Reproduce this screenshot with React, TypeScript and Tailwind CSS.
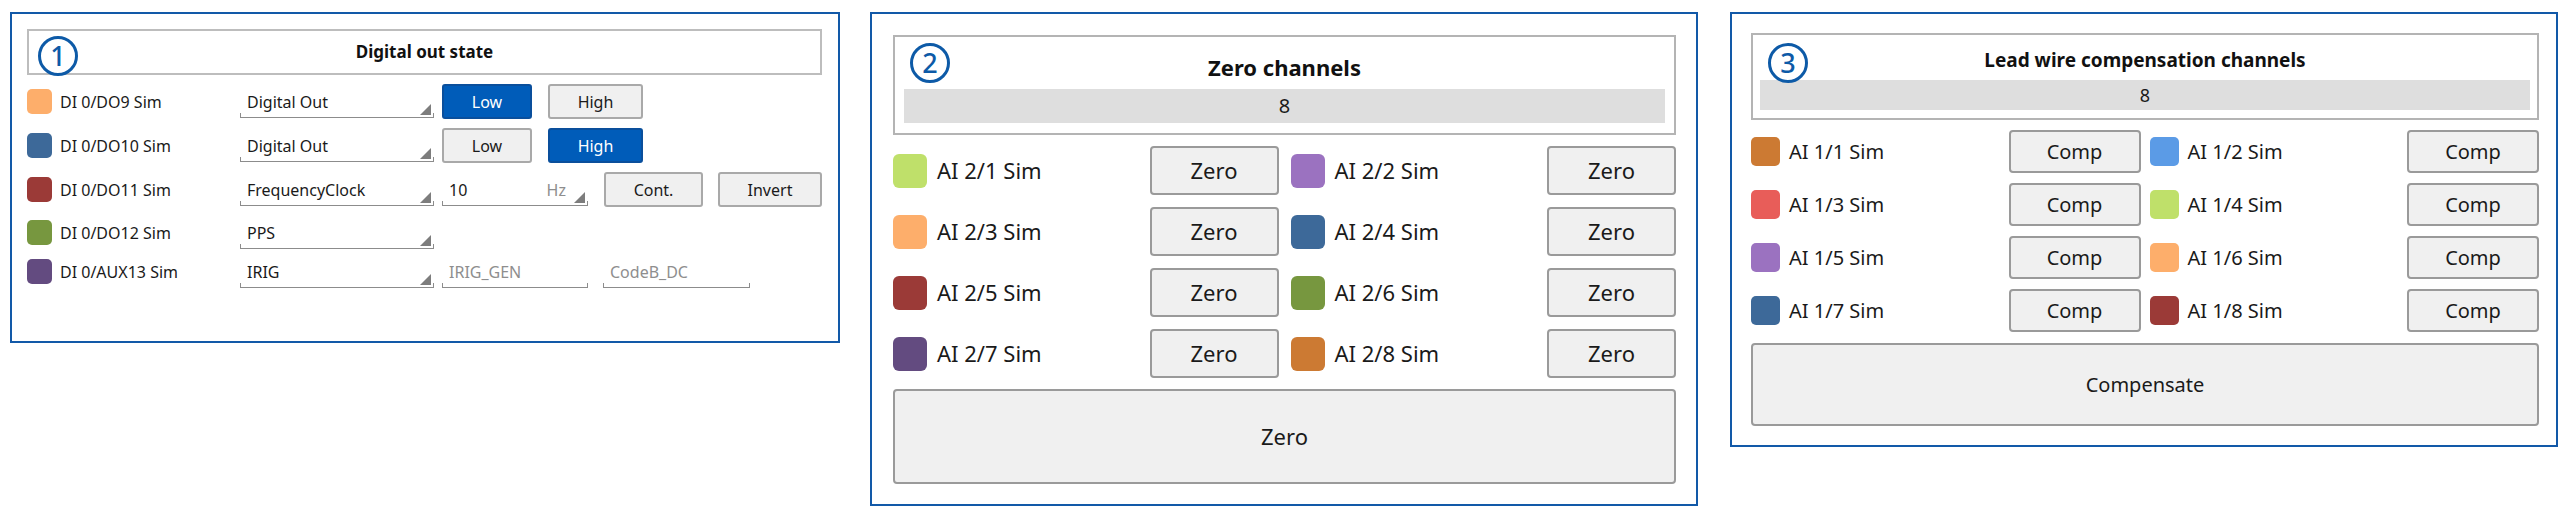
import React from 'react'

type DoRow = {
  name: string
  swatch: string
  mode: string
  kind: 'state' | 'freq' | 'none' | 'irig'
  active?: 'low' | 'high'
  gap: string
}

const doRows: DoRow[] = [
  { name: 'DI 0/DO9 Sim', swatch: 'bg-[#fdae6b]', mode: 'Digital Out', kind: 'state', active: 'low', gap: 'mt-[9px]' },
  { name: 'DI 0/DO10 Sim', swatch: 'bg-[#3d6999]', mode: 'Digital Out', kind: 'state', active: 'high', gap: 'mt-[9px]' },
  { name: 'DI 0/DO11 Sim', swatch: 'bg-[#9b3a37]', mode: 'FrequencyClock', kind: 'freq', gap: 'mt-[9px]' },
  { name: 'DI 0/DO12 Sim', swatch: 'bg-[#77973f]', mode: 'PPS', kind: 'none', gap: 'mt-[8px]' },
  { name: 'DI 0/AUX13 Sim', swatch: 'bg-[#634b80]', mode: 'IRIG', kind: 'irig', gap: 'mt-[4px]' },
]

const zeroChannels = [
  { name: 'AI 2/1 Sim', swatch: 'bg-[#bfe06a]' },
  { name: 'AI 2/2 Sim', swatch: 'bg-[#9b72c0]' },
  { name: 'AI 2/3 Sim', swatch: 'bg-[#fdae6b]' },
  { name: 'AI 2/4 Sim', swatch: 'bg-[#3d6999]' },
  { name: 'AI 2/5 Sim', swatch: 'bg-[#9b3a37]' },
  { name: 'AI 2/6 Sim', swatch: 'bg-[#77973f]' },
  { name: 'AI 2/7 Sim', swatch: 'bg-[#634b80]' },
  { name: 'AI 2/8 Sim', swatch: 'bg-[#cc7a33]' },
]

const compChannels = [
  { name: 'AI 1/1 Sim', swatch: 'bg-[#cc7a33]' },
  { name: 'AI 1/2 Sim', swatch: 'bg-[#5b9be6]' },
  { name: 'AI 1/3 Sim', swatch: 'bg-[#e85d59]' },
  { name: 'AI 1/4 Sim', swatch: 'bg-[#bfe06a]' },
  { name: 'AI 1/5 Sim', swatch: 'bg-[#9b72c0]' },
  { name: 'AI 1/6 Sim', swatch: 'bg-[#fdae6b]' },
  { name: 'AI 1/7 Sim', swatch: 'bg-[#3d6999]' },
  { name: 'AI 1/8 Sim', swatch: 'bg-[#9b3a37]' },
]

function Marker({ n, className }: { n: number; className: string }) {
  return (
    <div
      className={`absolute flex h-[40px] w-[40px] items-center justify-center rounded-full border-[3px] border-[#0d5aa7] text-[27px] font-medium leading-none text-[#0d5aa7] ${className}`}
    >
      <span className="-mt-[1px]">{n}</span>
    </div>
  )
}

function Corner() {
  return (
    <svg className="absolute bottom-[2px] right-[3px]" width="11" height="11" viewBox="0 0 11 11">
      <polygon points="11,0 11,11 0,11" fill="#7d7d7d" />
    </svg>
  )
}

// underline style field with end ticks, like the WinForms combo look
function Field({
  width,
  text,
  unit,
  muted,
  arrow = true,
}: {
  width: string
  text: string
  unit?: string
  muted?: boolean
  arrow?: boolean
}) {
  return (
    <div className={`relative mt-[9px] h-[25px] self-start border-b border-[#8c8c8c] ${width}`}>
      <div className="flex items-center pl-[7px] pr-[22px] text-[16px] leading-[18px]">
        <span className={muted ? 'text-[#8e8e8e]' : 'text-[#1a1a1a]'}>{text}</span>
        {unit && <span className="ml-auto text-[#8e8e8e]">{unit}</span>}
      </div>
      <span className="absolute bottom-0 left-0 h-[4px] w-px bg-[#8c8c8c]" />
      <span className="absolute bottom-0 right-0 h-[4px] w-px bg-[#8c8c8c]" />
      {arrow && <Corner />}
    </div>
  )
}

function SmallButton({ label, width, active }: { label: string; width: string; active?: boolean }) {
  return (
    <button
      className={`h-[35px] rounded-[3px] border-2 text-[16px] ${width} ${
        active ? 'border-[#0a4f9c] bg-[#005cb9] text-white' : 'border-[#a9a9a9] bg-[#f0f0f0] text-[#1a1a1a]'
      }`}
    >
      {label}
    </button>
  )
}

function DigitalOutPanel() {
  return (
    <section className="relative h-[331px] w-[830px] shrink-0 border-2 border-[#1259a8] pl-[15px] pr-[16px] pt-[15px]">
      <Marker n={1} className="left-[26px] top-[22px]" />
      <div className="flex h-[46px] items-center justify-center border-2 border-[#bdbdbd]">
        <h2 className="text-[17px] font-bold text-[#111]">Digital out state</h2>
      </div>
      {doRows.map((row) => (
        <div key={row.name} className={`flex h-[35px] items-center ${row.gap}`}>
          <div className="flex w-[213px] items-center gap-[8px]">
            <span className={`h-[25px] w-[25px] rounded-[5px] ${row.swatch}`} />
            <span className="text-[16px] text-[#1a1a1a]">{row.name}</span>
          </div>
          <Field width="w-[194px]" text={row.mode} />
          {row.kind === 'state' && (
            <div className="ml-[8px] flex items-center gap-[16px]">
              <SmallButton label="Low" width="w-[90px]" active={row.active === 'low'} />
              <SmallButton label="High" width="w-[95px]" active={row.active === 'high'} />
            </div>
          )}
          {row.kind === 'freq' && (
            <div className="ml-[8px] flex h-full items-center">
              <Field width="w-[146px]" text="10" unit="Hz" />
              <div className="ml-[16px] flex items-center gap-[15px]">
                <SmallButton label="Cont." width="w-[99px]" />
                <SmallButton label="Invert" width="w-[104px]" />
              </div>
            </div>
          )}
          {row.kind === 'irig' && (
            <div className="ml-[8px] flex h-full gap-[15px]">
              <Field width="w-[146px]" text="IRIG_GEN" muted arrow={false} />
              <Field width="w-[147px]" text="CodeB_DC" muted arrow={false} />
            </div>
          )}
        </div>
      ))}
    </section>
  )
}

function ZeroPanel() {
  return (
    <section className="relative flex h-[494px] w-[828px] shrink-0 flex-col border-2 border-[#1259a8] px-[20px] pb-[20px] pl-[21px] pt-[21px]">
      <Marker n={2} className="left-[38px] top-[29px]" />
      <div className="flex h-[100px] flex-col border-2 border-[#b4b4b4] px-[9px] pb-[10px] pt-[13px]">
        <h2 className="flex h-[34px] items-center justify-center text-[22px] font-bold text-[#111]">Zero channels</h2>
        <div className="mt-[5px] flex h-[34px] items-center justify-center bg-[#dedede] text-[20px] text-[#1a1a1a]">8</div>
      </div>
      <div className="mt-[11px] grid grid-cols-2 gap-x-[12px] gap-y-[12px]">
        {zeroChannels.map((ch) => (
          <div key={ch.name} className="flex h-[49px] items-center">
            <span className={`h-[34px] w-[34px] rounded-[6px] ${ch.swatch}`} />
            <span className="ml-[10px] text-[22px] text-[#1a1a1a]">{ch.name}</span>
            <button className="ml-auto h-[49px] w-[129px] rounded-[4px] border-2 border-[#9a9a9a] bg-[#f0f0f0] text-[22px] text-[#1a1a1a]">
              Zero
            </button>
          </div>
        ))}
      </div>
      <button className="mt-[11px] h-[95px] w-full rounded-[4px] border-2 border-[#9a9a9a] bg-[#f0f0f0] text-[22px] text-[#1a1a1a]">
        Zero
      </button>
    </section>
  )
}

function CompensationPanel() {
  return (
    <section className="relative flex h-[435px] w-[828px] shrink-0 flex-col border-2 border-[#1259a8] pb-[19px] pl-[19px] pr-[17px] pt-[19px]">
      <Marker n={3} className="left-[36px] top-[29px]" />
      <div className="flex h-[87px] flex-col border-2 border-[#b4b4b4] px-[7px] pb-[8px] pt-[10px]">
        <h2 className="flex h-[30px] items-center justify-center text-[19px] font-bold text-[#111]">
          Lead wire compensation channels
        </h2>
        <div className="mt-[5px] flex h-[30px] items-center justify-center bg-[#dedede] text-[18px] text-[#1a1a1a]">8</div>
      </div>
      <div className="mt-[10px] grid grid-cols-2 gap-x-[9px] gap-y-[10px]">
        {compChannels.map((ch) => (
          <div key={ch.name} className="flex h-[43px] items-center">
            <span className={`h-[29px] w-[29px] rounded-[5px] ${ch.swatch}`} />
            <span className="ml-[9px] text-[20px] text-[#1a1a1a]">{ch.name}</span>
            <button className="ml-auto h-[43px] w-[132px] rounded-[4px] border-2 border-[#9a9a9a] bg-[#f0f0f0] text-[20px] text-[#1a1a1a]">
              Comp
            </button>
          </div>
        ))}
      </div>
      <button className="mt-[11px] h-[83px] w-full rounded-[4px] border-2 border-[#9a9a9a] bg-[#f0f0f0] text-[20px] text-[#1a1a1a]">
        Compensate
      </button>
    </section>
  )
}

export default function App() {
  return (
    <div className="flex h-[508px] w-[2560px] items-start bg-white pl-[10px] pt-[12px] font-['Noto_Sans',sans-serif]">
      <DigitalOutPanel />
      <div className="ml-[30px]">
        <ZeroPanel />
      </div>
      <div className="ml-[32px]">
        <CompensationPanel />
      </div>
    </div>
  )
}
